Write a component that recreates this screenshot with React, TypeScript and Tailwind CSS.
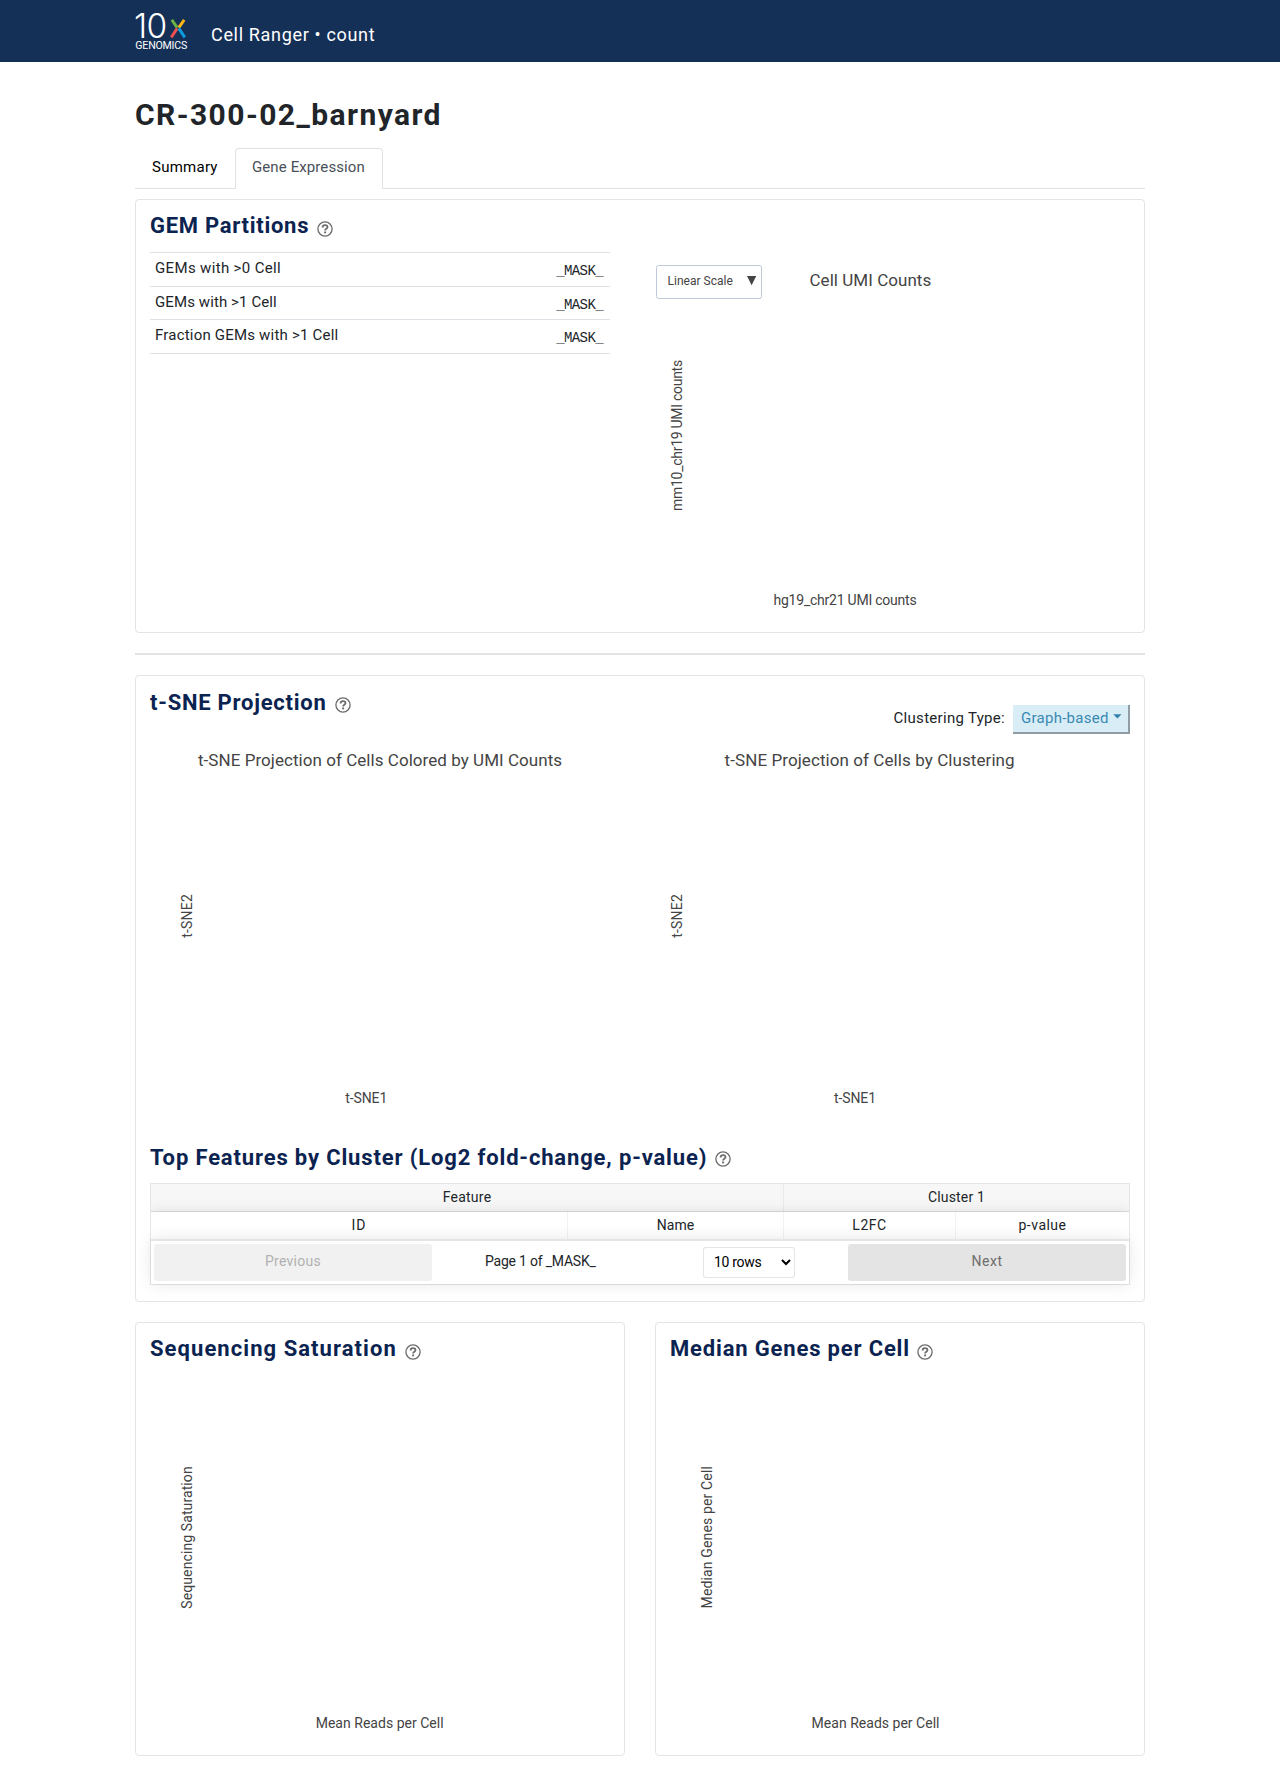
import React from "react";

function HelpIcon({ className }: { className: string }) {
  return (
    <svg className={`relative shrink-0 ${className}`} width="16" height="16" viewBox="0 0 16 16" fill="none" stroke="#6b6b6b">
      <circle cx="8" cy="8" r="7.1" strokeWidth="1.3" />
      <path d="M5.6 6.4 C5.6 3.4 10.5 3.4 10.5 6.1 C10.5 7.8 8.1 7.8 8.1 9.6" strokeWidth="1.8" />
      <path d="M7.1 11.4 H9.1" strokeWidth="1.8" />
    </svg>
  );
}

function Heading({ text, className, icon }: { text: string; className: string; icon: string }) {
  return (
    <div className="flex h-[26px] items-center">
      <h2 className={`pt-[3px] text-[22px] leading-[26px] font-bold whitespace-nowrap text-[#0b2350] ${className}`}>{text}</h2>
      <HelpIcon className={icon} />
    </div>
  );
}

function Logo() {
  return (
    <svg width="54" height="40" viewBox="135 11 54 40" className="-mt-[1px] overflow-visible">
      <text x="134 146.6" y="37.6" fill="#fff" fontSize="33.5" fontWeight="300" className="font-['Inter']">10</text>
      <g strokeWidth="2.9" fill="none">
        <path d="M171.8 19.8 L177.2 27.6" stroke="#6cb644" />
        <path d="M184.2 19.8 L178.8 27.6" stroke="#fdb714" />
        <path d="M177.2 28.4 L171.2 37.4" stroke="#ee4f4f" />
        <path d="M178.8 28.4 L184.8 37.4" stroke="#0c9ee0" />
      </g>
      <text x="135.3" y="48.8" fill="#fff" fontSize="10.6" textLength="52" className="font-['Roboto']">GENOMICS</text>
    </svg>
  );
}

type Label = { text: string; x: number; y: number; spacing: string; title?: boolean; vertical?: boolean };

function Plot({ box, labels, children }: { box: [number, number, number, number]; labels: Label[]; children?: React.ReactNode }) {
  return (
    <svg className="block shrink-0 font-['Roboto']" width={box[2]} height={box[3]} viewBox={box.join(" ")}>
      {labels.map((l) => (
        <text
          key={l.text}
          fill="#444"
          textAnchor="start"
          fontSize={l.title ? 17 : 14}
          letterSpacing={l.spacing}
          x={l.vertical ? 0 : l.x}
          y={l.vertical ? 0 : l.y}
          transform={l.vertical ? `translate(${l.x} ${l.y}) rotate(-90)` : undefined}
        >
          {l.text}
        </text>
      ))}
      {children}
    </svg>
  );
}

const partitions = [
  { name: "GEMs with >0 Cell", spacing: "tracking-[0.35px]", height: "h-[34px]" },
  { name: "GEMs with >1 Cell", spacing: "tracking-[0.1px]", height: "h-[33px]" },
  { name: "Fraction GEMs with >1 Cell", spacing: "tracking-[0.2px]", height: "h-[34px]" },
];

const card = "rounded-[4px] border border-[#e3e4e6] bg-white px-[14px]";
const cell = "border-r border-black/5 text-center";

export default function App() {
  return (
    <div className="min-h-[1766px] bg-white font-['Roboto',sans-serif] text-[#212529]">
      <header className="h-[62px] bg-[#153057]">
        <div className="mx-auto flex h-full w-[1010px] items-center">
          <Logo />
          <span className="mt-[7px] ml-[22px] text-[18px] leading-[24px] tracking-[0.67px] text-white">Cell Ranger • count</span>
        </div>
      </header>

      <main className="mx-auto w-[1010px]">
        <h1 className="pt-[35px] text-[30px] leading-[36px] font-bold tracking-[1.43px]">CR-300-02_barnyard</h1>

        <nav className="mt-[15px] flex h-[41px] border-b border-[#dee2e6] text-[15px] leading-[22px]">
          <a className="w-[100px] pt-[8px] pl-[17px] tracking-[0.25px] text-black">Summary</a>
          <a className="-mb-px w-[148px] rounded-t-[4px] border border-b-0 border-[#dee2e6] bg-white pt-[7px] pl-[16px] tracking-[0.1px] text-[#495057]">
            Gene Expression
          </a>
        </nav>

        <section className={`mt-[10px] h-[434px] pt-[11px] ${card}`}>
          <Heading text="GEM Partitions" className="tracking-[0.72px]" icon="top-[5px] ml-[8px]" />
          <div className="mt-[15px] flex justify-between">
            <div className="w-[460px]">
              <div className="border-b border-[#dee2e6]" />
              {partitions.map((p) => (
                <div key={p.name} className={`flex justify-between border-b border-[#dee2e6] pr-[7px] pl-[5px] ${p.height}`}>
                  <span className={`pt-[4px] text-[15px] leading-[22px] ${p.spacing}`}>{p.name}</span>
                  <span className="pt-[7px] font-['Liberation_Mono'] text-[14px] leading-[22px] tracking-[-0.6px]">_MASK_</span>
                </div>
              ))}
            </div>
            <Plot
              box={[640, 252, 490, 370]}
              labels={[
                { text: "Cell UMI Counts", x: 809.5, y: 286, spacing: "0.04", title: true },
                { text: "mm10_chr19 UMI counts", x: 682, y: 511, spacing: "-0.28", vertical: true },
                { text: "hg19_chr21 UMI counts", x: 773.5, y: 605, spacing: "-0.23" },
              ]}
            >
              <rect x="656.5" y="265.5" width="105" height="33" rx="2" fill="#fff" stroke="#bec8d9" />
              <text x="667.5" y="285.4" fontSize="12" letterSpacing="0.02" fill="#444">Linear Scale</text>
              <path d="M747 276 H756.3 L751.6 285.3 Z" fill="#444" />
            </Plot>
          </div>
        </section>

        <div className="my-[20px] h-[2px] bg-[#e3e4e5]" />

        <section className={`h-[627px] pt-[12px] ${card}`}>
          <div className="flex h-[56px] justify-between">
            <Heading text="t-SNE Projection" className="tracking-[0.76px]" icon="top-[4px] ml-[8px]" />
            <div className="mt-[17px] flex h-[29px] text-[15px] leading-[26px]">
              <span className="mr-[8px] tracking-[0.3px]">Clustering Type:</span>
              <button className="flex w-[117px] items-start border-r-2 border-b-2 border-[#909da4] bg-[#d9edf7] pl-[8px] tracking-[0.27px] text-[#3a8ab2]">
                <span>Graph-based</span>
                <svg className="mt-[9px] ml-[4px]" width="9" height="5" viewBox="0 0 9 5">
                  <path d="M0.3 0.3 H8.5 L4.4 4.5 Z" fill="#2f7fa9" />
                </svg>
              </button>
            </div>
          </div>
          <div className="flex">
            <Plot
              box={[150, 744, 490, 399]}
              labels={[
                { text: "t-SNE Projection of Cells Colored by UMI Counts", x: 198, y: 766, spacing: "0.05", title: true },
                { text: "t-SNE2", x: 192.3, y: 937.8, spacing: "0.2", vertical: true },
                { text: "t-SNE1", x: 345.2, y: 1102.5, spacing: "-0.1" },
              ]}
            />
            <Plot
              box={[640, 744, 490, 399]}
              labels={[
                { text: "t-SNE Projection of Cells by Clustering", x: 724.6, y: 766, spacing: "0.08", title: true },
                { text: "t-SNE2", x: 682.3, y: 937.8, spacing: "0.2", vertical: true },
                { text: "t-SNE1", x: 834, y: 1102.5, spacing: "-0.1" },
              ]}
            />
          </div>
          <Heading text="Top Features by Cluster (Log2 fold-change, p-value)" className="tracking-[0.85px]" icon="top-[3px] ml-[8px]" />

          <div className="mt-[14px] h-[102px] border border-black/10 text-[14px]">
            <div className="overflow-hidden">
              <div className="flex h-[28px] border-b border-black/10 bg-[#f7f7f7] leading-[27px]">
                <div className={`w-[633px] tracking-[0.24px] ${cell}`}>Feature</div>
                <div className="flex-1 text-center tracking-[0.16px]">Cluster 1</div>
              </div>
              <div className="flex h-[27px] leading-[26px] shadow-[0_2px_15px_0_rgba(0,0,0,0.15)]">
                <div className={`w-[417px] tracking-[1px] ${cell}`}>ID</div>
                <div className={`w-[216px] tracking-[0.04px] ${cell}`}>Name</div>
                <div className={`w-[172px] tracking-[0.5px] ${cell}`}>L2FC</div>
                <div className="flex-1 text-center tracking-[0.48px]">p-value</div>
              </div>
            </div>
            <div className="relative flex h-[45px] border-t-2 border-black/10 p-[3px] leading-[34px] shadow-[0_0_15px_0_rgba(0,0,0,0.1)]">
              <button className="w-[278px] rounded-[3px] bg-[#f1f1f1] pb-[3px] tracking-[0.26px] text-[#b1b1b1]">Previous</button>
              <div className="flex flex-1 items-start pl-[53px]">
                <span className="w-[218px] tracking-[-0.21px]">Page 1 of _MASK_</span>
                <select className="mt-[3px] h-[31px] w-[92px] rounded-[3px] border border-black/10 bg-white px-[6px] pt-[4px] pb-[6px] leading-[18px] tracking-[-0.3px] text-black">
                  <option>10 rows</option>
                </select>
              </div>
              <button className="w-[278px] rounded-[3px] bg-[#e4e4e4] pb-[3px] tracking-[0.5px] text-[#6d6d6d]">Next</button>
            </div>
          </div>
        </section>

        <div className="mt-[20px] flex justify-between">
          <section className={`h-[434px] w-[490px] pt-[11px] ${card}`}>
            <Heading text="Sequencing Saturation" className="tracking-[1.06px]" icon="top-[5px] ml-[8px]" />
            <Plot
              box={[150, 1360, 460, 380]}
              labels={[
                { text: "Sequencing Saturation", x: 192.2, y: 1608.7, spacing: "0.1", vertical: true },
                { text: "Mean Reads per Cell", x: 315.7, y: 1728, spacing: "0.02" },
              ]}
            />
          </section>
          <section className={`h-[434px] w-[490px] pt-[11px] ${card}`}>
            <Heading text="Median Genes per Cell" className="tracking-[0.83px]" icon="top-[5px] ml-[7px]" />
            <Plot
              box={[670, 1360, 460, 380]}
              labels={[
                { text: "Median Genes per Cell", x: 712, y: 1608.4, spacing: "0.14", vertical: true },
                { text: "Mean Reads per Cell", x: 811.6, y: 1728, spacing: "0.02" },
              ]}
            />
          </section>
        </div>
      </main>
    </div>
  );
}
